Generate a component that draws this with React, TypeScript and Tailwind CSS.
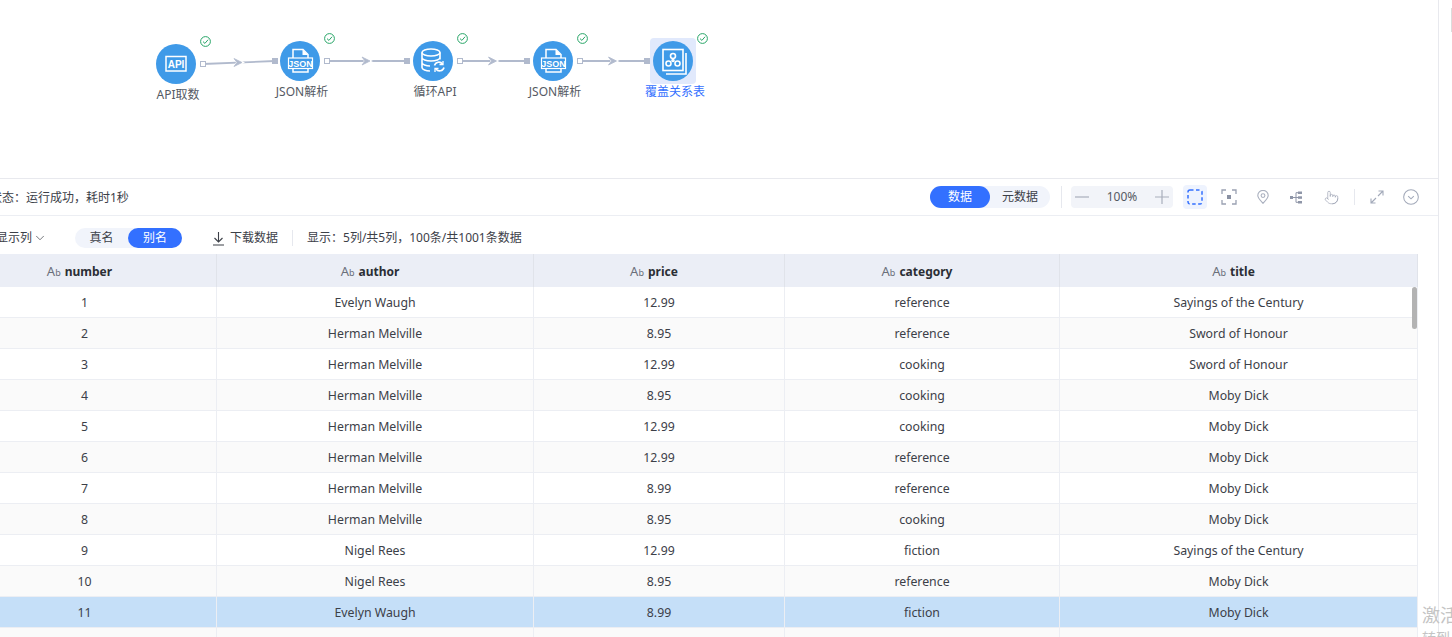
import React from 'react';
import { ChevronDown, Pointer } from 'lucide-react';

const sans = { fontFamily: '"Noto Sans", "Noto Sans CJK SC", sans-serif' };

const rows = [
  ['1', 'Evelyn Waugh', '12.99', 'reference', 'Sayings of the Century'],
  ['2', 'Herman Melville', '8.95', 'reference', 'Sword of Honour'],
  ['3', 'Herman Melville', '12.99', 'cooking', 'Sword of Honour'],
  ['4', 'Herman Melville', '8.95', 'cooking', 'Moby Dick'],
  ['5', 'Herman Melville', '12.99', 'cooking', 'Moby Dick'],
  ['6', 'Herman Melville', '12.99', 'reference', 'Moby Dick'],
  ['7', 'Herman Melville', '8.99', 'reference', 'Moby Dick'],
  ['8', 'Herman Melville', '8.95', 'cooking', 'Moby Dick'],
  ['9', 'Nigel Rees', '12.99', 'fiction', 'Sayings of the Century'],
  ['10', 'Nigel Rees', '8.95', 'reference', 'Moby Dick'],
  ['11', 'Evelyn Waugh', '8.99', 'fiction', 'Moby Dick'],
];

const columns = ['number', 'author', 'price', 'category', 'title'];
const gridCols = 'grid grid-cols-[264px_317px_251px_275px_358px]';

const ApiIcon = () => (
  <svg width="24" height="24" viewBox="0 0 24 24" fill="none">
    <rect x="2" y="4.500" width="20" height="14.500" stroke="white" strokeWidth="1.500" />
    <text x="12" y="15.500" textAnchor="middle" fill="white" fontSize="10" fontWeight="700" fontFamily="Liberation Sans, sans-serif">API</text>
  </svg>
);

const JsonIcon = () => (
  <svg width="30" height="28" viewBox="0 0 30 28" fill="none">
    <path d="M8 11V2.500h10l5 5V11M8 21.500v3.500h15v-3.500" stroke="white" strokeWidth="1.500" />
    <path d="M17.500 2.500v5.500H23z" fill="white" />
    <rect x="3.500" y="11" width="24" height="10.500" stroke="white" strokeWidth="1.200" />
    <text x="15.500" y="19.500" textAnchor="middle" fill="white" fontSize="9" fontWeight="700" fontFamily="Liberation Sans, sans-serif">JSON</text>
  </svg>
);

const LoopIcon = () => (
  <svg width="28" height="28" viewBox="0 0 28 28" fill="none" stroke="white" strokeWidth="1.600">
    <ellipse cx="12" cy="5.500" rx="9" ry="3.500" />
    <path d="M3 5.500v15c0 2 4 3.500 8 3.500M21 5.500v7M3 10.500c0 2 4 3.500 9 3.500s9-1.500 9-3.500M3 15.500c0 2 4 3.500 8 3.500" />
    <path d="M15.500 18.500a4.500 4.500 0 0 1 8-1.500M25 20.500a4.500 4.500 0 0 1-8 1.500" />
    <path d="M24 14v3.500h-3.500M16 25v-3.500h3.500" strokeWidth="1.300" />
  </svg>
);

const MapIcon = () => (
  <svg width="28" height="28" viewBox="0 0 28 28" fill="none" stroke="white" strokeWidth="1.600">
    <rect x="4" y="2.500" width="20" height="21" />
    <path d="M27 6v21H7" />
    <circle cx="14" cy="9" r="2.500" />
    <circle cx="9.500" cy="16.500" r="2.500" />
    <circle cx="18.500" cy="16.500" r="2.500" />
    <circle cx="14" cy="13.500" r="1" />
  </svg>
);

const CheckBadge = () => (
  <svg width="11" height="11" viewBox="0 0 11 11" fill="none" stroke="#27a567" strokeWidth="1">
    <circle cx="5.500" cy="5.500" r="4.900" />
    <path d="M3 5.600l1.900 1.800 3.200-3.700" />
  </svg>
);

const nodes = [
  { cx: 176, cy: 64, label: 'API取数', labelY: 94, icon: <ApiIcon /> },
  { cx: 300, cy: 61, label: 'JSON解析', labelY: 91, icon: <JsonIcon /> },
  { cx: 433, cy: 61, label: '循环API', labelY: 91, icon: <LoopIcon /> },
  { cx: 553, cy: 61, label: 'JSON解析', labelY: 91, icon: <JsonIcon /> },
  { cx: 673, cy: 61, label: '覆盖关系表', labelY: 91, icon: <MapIcon />, active: true },
];

const links = [
  { x1: 203, y1: 64, x2: 275, y2: 61 },
  { x1: 327, y1: 61, x2: 407, y2: 61 },
  { x1: 460, y1: 61, x2: 527, y2: 61 },
  { x1: 580, y1: 61, x2: 647, y2: 61 },
];

const FlowCanvas = () => (
  <div className="relative h-[179px] border-b border-[#e8e9ee]">
    <svg className="absolute left-0 top-0" width="720" height="120" fill="none">
      {links.map((l) => {
        const mx = (l.x1 + l.x2) / 2 - 1;
        const my = (l.y1 + l.y2) / 2;
        return (
          <g key={l.x1}>
            <line x1={l.x1} y1={l.y1} x2={l.x2} y2={l.y2} stroke="#b1bacd" strokeWidth="1.800" />
            <path d={`M${mx - 7} ${my - 7}L${mx + 7} ${my}L${mx - 7} ${my + 7}L${mx - 2} ${my}Z`} fill="white" />
            <path d={`M${mx - 4} ${my - 4}L${mx + 4} ${my}L${mx - 4} ${my + 4}L${mx - 1} ${my}Z`} fill="#b1bacd" stroke="#b1bacd" strokeWidth="0.800" />
            <rect x={l.x1 - 2.500} y={l.y1 - 2.500} width="5" height="5" fill="white" stroke="#b1bacd" />
            <rect x={l.x2 - 3} y={l.y2 - 3} width="6" height="6" fill="#b1bacd" />
          </g>
        );
      })}
    </svg>
    {nodes.map((n) => (
      <React.Fragment key={n.cx}>
        {n.active && <div className="absolute left-[650px] top-[38px] h-[46px] w-[46px] rounded bg-[#e1e9fc]" />}
        <div
          className="absolute flex h-10 w-10 items-center justify-center rounded-full bg-[#3f9ae8]"
          style={{ left: n.cx - 20, top: n.cy - 20 }}
        >
          {n.icon}
        </div>
        <div className="absolute flex" style={{ left: n.cx + 24, top: n.cy - 28 }}>
          <CheckBadge />
        </div>
        <div
          className={`absolute w-[100px] text-center text-xs leading-4 ${n.active ? 'text-[#3370ff]' : 'text-[#555a63]'}`}
          style={{ left: n.cx - 48, top: n.labelY - 7 }}
        >
          {n.label}
        </div>
      </React.Fragment>
    ))}
  </div>
);

const Toolbar = () => (
  <div className="flex h-[37px] items-center border-b border-[#eceef3] pr-[19px] text-xs text-[#3c4048]">
    <span className="ml-[-10px] whitespace-nowrap pt-0.5">{'状态\uFF1A运行成功\uFF0C耗时1秒'}</span>
    <div className="ml-auto flex h-[22px] w-[120px] items-center rounded-full bg-[#f1f4fb]">
      <span className="flex h-full w-[60px] items-center justify-center rounded-full bg-[#3370ff] text-white">数据</span>
      <span className="flex-1 text-center">元数据</span>
    </div>
    <div className="ml-[11px] h-[22px] w-px bg-[#e6e8ee]" />
    <div className="ml-[9px] flex h-[22px] w-[102px] items-center justify-between rounded-sm bg-[#f2f4f9] px-1 text-[#555a63]">
      <svg width="14" height="14" viewBox="0 0 14 14" stroke="#a8aebb" strokeWidth="1.200"><path d="M0 7h14" /></svg>
      <span>100%</span>
      <svg width="14" height="14" viewBox="0 0 14 14" stroke="#a8aebb" strokeWidth="1.200"><path d="M0 7h14M7 0v14" /></svg>
    </div>
    <div className="ml-[10px] flex h-6 w-6 items-center justify-center rounded-sm bg-[#eef3fe]">
      <svg width="16" height="16" viewBox="0 0 16 16" fill="none" stroke="#3370ff" strokeWidth="1.500">
        <rect x="1" y="1" width="14" height="14" rx="2" strokeDasharray="3.500 2.500" />
      </svg>
    </div>
    <svg className="ml-[14px]" width="16" height="16" viewBox="0 0 16 16" fill="none" stroke="#9aa1b2" strokeWidth="1.300">
      <path d="M1 5V1h4M11 1h4v4M15 11v4h-4M5 15H1v-4" />
      <rect x="6" y="6" width="4" height="4" fill="#8a91a3" stroke="none" />
    </svg>
    <svg className="ml-[20px]" width="12" height="14" viewBox="0 0 12 14" fill="none" stroke="#aab0bf" strokeWidth="1.100">
      <path d="M6 13.300C3.800 10.800 0.800 8.500 0.800 5.600a5.200 5.200 0 0 1 10.400 0c0 2.900-3 5.200-5.200 7.700z" />
      <circle cx="6" cy="5.600" r="1.900" />
    </svg>
    <svg className="ml-[21px]" width="12" height="13" viewBox="0 0 12 13" fill="#8f96a8" stroke="#8f96a8" strokeWidth="1">
      <rect x="0" y="5" width="3" height="3" stroke="none" />
      <rect x="8" y="0.500" width="4" height="2.500" stroke="none" />
      <rect x="8" y="5.300" width="4" height="2.500" stroke="none" />
      <rect x="8" y="10" width="4" height="2.500" stroke="none" />
      <path d="M3 6.500h3M6 1.700v9.600M6 1.700h2M6 6.500h2M6 11.300h2" fill="none" />
    </svg>
    <Pointer size={15} strokeWidth={1.100} className="ml-[22px] text-[#9aa1b2]" />
    <div className="ml-[15px] h-4 w-px bg-[#e6e8ee]" />
    <svg className="ml-[15px]" width="14" height="14" viewBox="0 0 14 14" fill="none" stroke="#a2a9b9" strokeWidth="1.100">
      <path d="M8.500 1h4.500v4.500M13 1L8 6M5.500 13H1V8.500M1 13l5-5" />
    </svg>
    <svg className="ml-[19px]" width="16" height="16" viewBox="0 0 17 17" fill="none" stroke="#a2a9b9" strokeWidth="1.100">
      <circle cx="8.500" cy="8.500" r="7.800" />
      <path d="M5.500 7.500l3 3 3-3" />
    </svg>
  </div>
);

const FilterBar = () => (
  <div className="flex h-[38px] items-center pt-[6px] text-xs text-[#3c4048]">
    <span className="ml-[-4px] whitespace-nowrap">显示列</span>
    <ChevronDown size={14} strokeWidth={1.200} className="ml-[1px]" />
    <div className="ml-[28px] flex h-5 w-[107px] items-center rounded-full bg-[#f1f4fb]">
      <span className="flex-1 text-center">真名</span>
      <span className="flex h-full w-[54px] items-center justify-center rounded-full bg-[#3370ff] text-white">别名</span>
    </div>
    <svg className="ml-[30px]" width="13" height="15" viewBox="0 0 13 15" fill="none" stroke="#3c4048" strokeWidth="1.100">
      <path d="M6.500 1v9.500M2.500 7l4 4 4-4M1 14h11" />
    </svg>
    <span className="ml-[5px]">下载数据</span>
    <div className="ml-[14px] h-4 w-px bg-[#e6e8ee]" />
    <span className="ml-[14px]">{'显示\uFF1A5列/共5列\uFF0C100条/共1001条数据'}</span>
  </div>
);

const DataTable = () => (
  <div className="relative ml-[-47px] w-[1465px] text-[12.300px] text-[#3c4048]">
    <div className={`${gridCols} h-[33px] bg-[#ebeef6]`}>
      {columns.map((c) => (
        <div key={c} className="flex items-center justify-center border-r border-[#e0e3ea] pr-[10px] pt-0.5 text-xs font-bold text-[#2b2e35]">
          <span className="mr-[4px] text-[13px] font-normal text-[#6a6f7a]">A<span className="text-[9px]">b</span></span>
          {c}
        </div>
      ))}
    </div>
    {rows.map((r, i) => (
      <div
        key={r[0]}
        className={`${gridCols} h-[31px] border-b border-[#eceef3] ${i === 10 ? 'bg-[#c5dff8]' : i % 2 ? 'bg-[#fafafa]' : 'bg-white'}`}
      >
        {r.map((v, j) => (
          <div key={j} className="flex items-center justify-center border-r border-[#eceef3] pt-0.5">{v}</div>
        ))}
      </div>
    ))}
    <div className={`${gridCols} h-[31px] bg-[#fafafa]`}>
      {columns.map((c) => <div key={c} className="border-r border-[#eceef3]" />)}
    </div>
    <div className="absolute right-[1px] top-[33px] h-[42px] w-[5px] rounded-sm bg-[#b3b3b3]" />
  </div>
);

export default function App() {
  return (
    <div className="relative flex h-[637px] w-[1452px] overflow-hidden bg-white" style={sans}>
      <div className="w-[1439px] shrink-0 overflow-hidden border-r border-[#e8e9ee]">
        <FlowCanvas />
        <Toolbar />
        <FilterBar />
        <DataTable />
      </div>
      <div className="absolute right-0 top-[8px] h-6 w-px bg-[#dcdcdc]" />
      <div className="absolute left-[1422px] top-[603px] whitespace-nowrap text-lg leading-6 text-[#c4c4c4]">激活</div>
      <div className="absolute left-[1422px] top-[630px] whitespace-nowrap text-sm leading-4 text-[#c4c4c4]">转到</div>
    </div>
  );
}
